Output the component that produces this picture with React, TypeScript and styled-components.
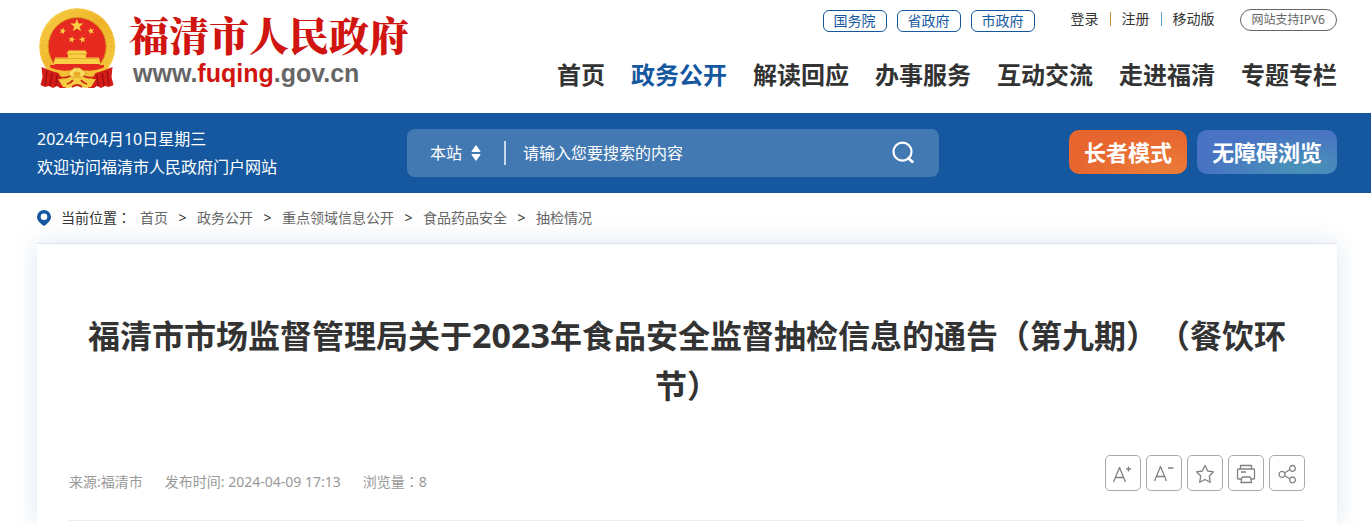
import React from "react";
import styled, { createGlobalStyle } from "styled-components";

const sans = `"Noto Sans", "Noto Sans CJK SC", sans-serif`;

const GlobalStyle = createGlobalStyle`
  * { box-sizing: border-box; }
  body {
    margin: 0;
    background: #fff;
    color: #333;
    font-family: ${sans};
    font-size: 14px;
    text-spacing-trim: space-all;
    overflow-x: hidden;
  }
  a { color: inherit; text-decoration: none; }
  button, input, select { font: inherit; color: inherit; }
`;

const Wrap = styled.div`
  padding: 0 34px 0 37px;
`;

const Header = styled.header`
  display: flex;
  justify-content: space-between;
  height: 113px;
`;

const Logo = styled.a`
  display: flex;
  align-items: flex-start;
  gap: 13px;
  padding: 8px 0 0 1px;
`;

const LogoText = styled.div`
  display: flex;
  flex-direction: column;
`;

const SiteName = styled.span`
  font-family: "Noto Serif CJK SC", "Noto Sans CJK SC", serif;
  font-weight: 900;
  font-size: 40px;
  line-height: 52px;
  color: #d0140f;
  white-space: nowrap;
`;

const SiteUrl = styled.span`
  padding-left: 4px;
  font-family: "Liberation Sans", sans-serif;
  font-weight: 700;
  font-size: 25px;
  line-height: 26px;
  color: #666;
  em { font-style: normal; color: #d0140f; }
`;

const HeaderRight = styled.div`
  display: flex;
  flex-direction: column;
  align-items: flex-end;
  padding-top: 9px;
`;

const TopLinks = styled.div`
  display: flex;
  align-items: center;
  height: 22px;
  white-space: nowrap;
`;

const GovLinks = styled.div`
  display: flex;
  gap: 10px;
  padding-top: 2px;
  margin-right: 36px;
`;

const GovLink = styled.a`
  width: 64px;
  height: 22px;
  border: 1px solid #15589f;
  border-radius: 6px;
  line-height: 20px;
  text-align: center;
  color: #15589f;
`;

const UserLinks = styled.div`
  display: flex;
  align-items: center;
  line-height: 20px;
  margin-right: 25px;
  padding-bottom: 2px;
`;

const Bar = styled.span<{ $color: string }>`
  width: 1px;
  height: 14px;
  margin: 0 11px;
  background: ${(p) => p.$color};
`;

const Ipv6 = styled.a`
  height: 22px;
  padding: 0 11px;
  border: 1px solid #666;
  border-radius: 11px;
  font-size: 12px;
  line-height: 20px;
  color: #666;
`;

const Nav = styled.nav`
  display: flex;
  gap: 26px;
  margin-top: 26px;
`;

const NavLink = styled.a<{ $active?: boolean }>`
  font-size: 24px;
  font-weight: 700;
  line-height: 36px;
  white-space: nowrap;
  color: ${(p) => (p.$active ? "#15589f" : "#333")};
`;

const Band = styled.div`
  background: #15589f;
  color: #fff;
`;

const BandRow = styled(Wrap)`
  display: flex;
  align-items: center;
  height: 80px;
`;

const Welcome = styled.div`
  flex: 0 0 370px;
  font-size: 16px;
  line-height: 28px;
`;

const Search = styled.form`
  flex: 0 1 532px;
  display: flex;
  align-items: center;
  height: 48px;
  padding: 0 24px 0 23px;
  border-radius: 8px;
  background: rgba(255, 255, 255, 0.2);
  font-size: 16px;
`;

const Scope = styled.label`
  display: flex;
  align-items: center;
  gap: 8px;
  padding-right: 23px;
`;

const ScopeSelect = styled.select`
  appearance: none;
  width: 33px;
  padding: 0;
  border: 0;
  background: transparent;
  line-height: 24px;
`;

const SearchInput = styled.input`
  flex: 1;
  min-width: 0;
  height: 24px;
  padding: 0 0 0 17px;
  border: 0;
  border-left: 2px solid rgba(255, 255, 255, 0.7);
  outline: 0;
  background: transparent;
  &::placeholder { color: #fff; opacity: 1; }
`;

const SearchButton = styled.button`
  display: flex;
  padding: 0;
  border: 0;
  background: transparent;
`;

const Modes = styled.div`
  display: flex;
  gap: 10px;
  margin-left: auto;
  padding-bottom: 2px;
`;

const ModeButton = styled.button<{ $bg: string }>`
  height: 44px;
  padding: 0 15px;
  border: 0;
  border-radius: 10px;
  background: ${(p) => p.$bg};
  font-size: 22px;
  font-weight: 700;
  line-height: 44px;
  white-space: nowrap;
`;

const Crumbs = styled.nav`
  display: flex;
  align-items: center;
  height: 50px;
  line-height: 20px;
  white-space: nowrap;
`;

const CrumbLabel = styled.span`
  margin: 0 9px 0 10px;
`;

const Crumb = styled.a`
  color: #666;
`;

const CrumbSep = styled.span`
  width: 29px;
  text-align: center;
`;

const Punct = styled.span.attrs({ lang: "zh-TW" })`
  font-family: "Noto Sans CJK TC", sans-serif;
  line-height: 1;
`;

const Card = styled.main`
  padding: 67px 32px 3px;
  border-top: 1px solid #dfe3e8;
  background: #fff;
  box-shadow: 0 0 24px rgba(21, 88, 159, 0.14);
`;

const Title = styled.h1`
  margin: 0;
  font-size: 32px;
  font-weight: 700;
  line-height: 50px;
  text-align: center;
`;

const TitleYear = styled.span`
  font-size: 34px;
  line-height: 1;
`;

const MetaRow = styled.div`
  display: flex;
  justify-content: space-between;
  align-items: flex-end;
  margin-top: 44px;
  padding-bottom: 29px;
  border-bottom: 1px solid #eee;
`;

const Meta = styled.div`
  display: flex;
  gap: 22px;
  line-height: 18px;
  color: #999;
`;

const Tools = styled.div`
  display: flex;
  gap: 5px;
`;

const Tool = styled.button`
  display: flex;
  align-items: center;
  justify-content: center;
  width: 36px;
  height: 36px;
  padding: 0;
  border: 1px solid #aaa;
  border-radius: 5px;
  background: #fff;
`;

function star(cx: number, cy: number, r: number, turn = 0) {
  return Array.from({ length: 10 }, (_, i) => {
    const a = ((i * 36 + turn - 90) * Math.PI) / 180;
    const d = i % 2 ? r * 0.4 : r;
    return `${(cx + d * Math.cos(a)).toFixed(2)},${(cy + d * Math.sin(a)).toFixed(2)}`;
  }).join(" ");
}

const Emblem = () => (
  <svg width="78" height="82" viewBox="0 0 78 82" aria-hidden="true">
    <defs>
      <linearGradient id="gold" x1="0" y1="0" x2="1" y2="1">
        <stop offset="0" stopColor="#f9d24a" />
        <stop offset="0.5" stopColor="#efb52a" />
        <stop offset="1" stopColor="#f7cf45" />
      </linearGradient>
    </defs>
    <ellipse cx="39.2" cy="38.500" rx="38" ry="38.200" fill="url(#gold)" />
    <ellipse cx="39.2" cy="38.500" rx="34" ry="34" fill="none" stroke="#dd9b1c" strokeWidth="2" strokeDasharray="1 3" opacity=".4" />
    <ellipse cx="39.2" cy="38.500" rx="29" ry="29" fill="#e62a20" stroke="#d8961c" strokeWidth="1" />
    <g fill="#f8cf45">
      <polygon points={star(38.9, 17.7, 7)} />
      <polygon points={star(24.7, 23, 3.6, 15)} />
      <polygon points={star(53, 23, 3.6, -15)} />
      <polygon points={star(33.7, 31.5, 3.6, 10)} />
      <polygon points={star(44.5, 31.5, 3.6, -10)} />
      <path d="M30.500 42.500h17l2 3.500h-1.500v3.500h13l1.500 6.500H15.500l1.500-6.500h13V46h-1.500z" />
    </g>
    <path d="M29.500 46h19M17 50.500h44" stroke="#e09e20" strokeWidth=".8" />
    <path d="M12 57h54v5H12z" fill="#e62a20" />
    <path d="M8 57q14 9 31 4q17 5 31-4l-2 9q-12 7-29 5q-17 2-29-5z" fill="#f3bf34" />
    <path d="M3.500 59q9 4 17 6l8 15H22l-3-2-4 2-4-2-4 1-4.500-2 2-8zM74.500 59q-9 4-17 6l-8 15H56l3-2 4 2 4-2 4 1 4.500-2-2-8z" fill="#d31b18" />
    <path d="M9 63l-2 14M14 65l-2 13M19 67l-1 11M69 63l2 14M64 65l2 13M59 67l1 11" stroke="#9f100f" strokeWidth="1.400" fill="none" />
    <path d="M20 71q9 1 14-4h10q5 5 14 4l-5 8q-7 2-14-1q-7 3-14 1z" fill="#f6cb42" />
    <path d="M22 69q8 2 12-3M56 69q-8 2-12-3M29 76q4-1 6-4M49 76q-4-1-6-4M34 79q5-4 10 0" fill="none" stroke="#c9261a" strokeWidth="1.800" />
    <path d="M30 66q1-4 4-4l2-2h6l2 2q3 0 4 4l-4 3H34z" fill="#fadc62" stroke="#d6921b" strokeWidth=".8" />
    <ellipse cx="39" cy="66" rx="3.500" ry="2.500" fill="#e8ac28" />
  </svg>
);

const Arrows = () => (
  <svg width="10" height="18" viewBox="0 0 10 18" fill="#fff" aria-hidden="true">
    <path d="M5 1l4.500 6.200q0 .8-.8.8H1.300q-.8 0-.8-.8zM5 17l4.500-6.200q0-.8-.8-.8H1.300q-.8 0-.8.8z" />
  </svg>
);

const SearchIcon = () => (
  <svg width="24" height="24" viewBox="0 0 24 24" fill="none" stroke="#fff" strokeWidth="2.200" aria-hidden="true">
    <circle cx="11.500" cy="10.700" r="9" />
    <path d="M16.500 16.500l5.700 5" strokeWidth="2.800" />
  </svg>
);

const Pin = () => (
  <svg width="14" height="16" viewBox="0 0 14 16" aria-hidden="true">
    <path fillRule="evenodd" fill="#15589f" d="M7 0a7 7 0 0 1 7 7c0 3.300-3 6.300-7 9c-4-2.700-7-5.700-7-9a7 7 0 0 1 7-7zM7 3.500a3.300 3.300 0 1 0 0 6.600a3.300 3.300 0 0 0 0-6.600z" />
  </svg>
);

const toolIcons = [
  { label: "放大字号", d: "M3.500 22L9.500 7.500L15.500 22M5.500 17.500H13.500M16 9h5M18.500 6.500v5" },
  { label: "缩小字号", d: "M3.500 21L9.500 6.500L15.500 21M5.500 16.500H13.500M17 8h5.500" },
  { label: "收藏", d: "M13 5.500L15.700 11L21.500 11.800L17.300 16L18.300 22.300L13 19.500L7.700 22.300L8.700 16L4.500 11.800L10.300 11Z" },
  { label: "打印", d: "M7.500 9V5.500h11V9M8 19H5.500q-1 0-1-1v-8q0-1 1-1h15q1 0 1 1v8q0 1-1 1H18M8 12h5M9 17h8.500M9 17l-1 5.500h10.500L17.500 17" },
  { label: "分享", d: "M10.500 13L16 9.500M10.500 15.500L16 19M8 11.300a3 3 0 1 0 .01 0zM18.500 5.500a2.900 2.900 0 1 0 .01 0zM18.500 17a2.900 2.900 0 1 0 .01 0z" },
];

const navItems = ["首页", "政务公开", "解读回应", "办事服务", "互动交流", "走进福清", "专题专栏"];
const crumbs = ["首页", "政务公开", "重点领域信息公开", "食品药品安全", "抽检情况"];

export default function App() {
  return (
    <div lang="zh-CN">
      <GlobalStyle />
      <Wrap>
        <Header>
          <Logo href="#">
            <Emblem />
            <LogoText>
              <SiteName>福清市人民政府</SiteName>
              <SiteUrl>www.<em>fuqing</em>.gov.cn</SiteUrl>
            </LogoText>
          </Logo>
          <HeaderRight>
            <TopLinks>
              <GovLinks>
                {["国务院", "省政府", "市政府"].map((t) => (
                  <GovLink href="#" key={t}>{t}</GovLink>
                ))}
              </GovLinks>
              <UserLinks>
                <a href="#">登录</a>
                <Bar $color="#c68a3c" />
                <a href="#">注册</a>
                <Bar $color="#5a9fd0" />
                <a href="#">移动版</a>
              </UserLinks>
              <Ipv6 href="#">网站支持IPV6</Ipv6>
            </TopLinks>
            <Nav>
              {navItems.map((t) => (
                <NavLink href="#" key={t} $active={t === "政务公开"}>{t}</NavLink>
              ))}
            </Nav>
          </HeaderRight>
        </Header>
      </Wrap>
      <Band>
        <BandRow>
          <Welcome>
            <div>2024年04月10日星期三</div>
            <div>欢迎访问福清市人民政府门户网站</div>
          </Welcome>
          <Search onSubmit={(e) => e.preventDefault()}>
            <Scope>
              <ScopeSelect aria-label="搜索范围">
                <option>本站</option>
              </ScopeSelect>
              <Arrows />
            </Scope>
            <SearchInput type="text" aria-label="搜索" placeholder="请输入您要搜索的内容" />
            <SearchButton type="submit" aria-label="搜索">
              <SearchIcon />
            </SearchButton>
          </Search>
          <Modes>
            <ModeButton type="button" $bg="radial-gradient(ellipse at 80% 110%, #ec7f3a 0%, #e76630 65%)">长者模式</ModeButton>
            <ModeButton type="button" $bg="radial-gradient(ellipse at 75% 85%, #4893b8 0%, #4874c3 65%)">无障碍浏览</ModeButton>
          </Modes>
        </BandRow>
      </Band>
      <Wrap>
        <Crumbs aria-label="当前位置">
          <Pin />
          <CrumbLabel>当前位置<Punct>：</Punct></CrumbLabel>
          {crumbs.map((t, i) => (
            <React.Fragment key={t}>
              {i > 0 && <CrumbSep>&gt;</CrumbSep>}
              <Crumb href="#">{t}</Crumb>
            </React.Fragment>
          ))}
        </Crumbs>
        <Card>
          <Title>
            福清市市场监督管理局关于<TitleYear>2023</TitleYear>年食品安全监督抽检信息的通告（第九期）（餐饮环节）
          </Title>
          <MetaRow>
            <Meta>
              <span>来源:福清市</span>
              <span>发布时间: 2024-04-09 17:13</span>
              <span>浏览量<Punct>：</Punct>8</span>
            </Meta>
            <Tools>
              {toolIcons.map((t) => (
                <Tool type="button" key={t.label} aria-label={t.label}>
                  <svg width="26" height="26" viewBox="0 0 26 26" fill="none" stroke="#808080" strokeWidth="1.300" strokeLinejoin="round" aria-hidden="true">
                    <path d={t.d} />
                  </svg>
                </Tool>
              ))}
            </Tools>
          </MetaRow>
        </Card>
      </Wrap>
    </div>
  );
}
